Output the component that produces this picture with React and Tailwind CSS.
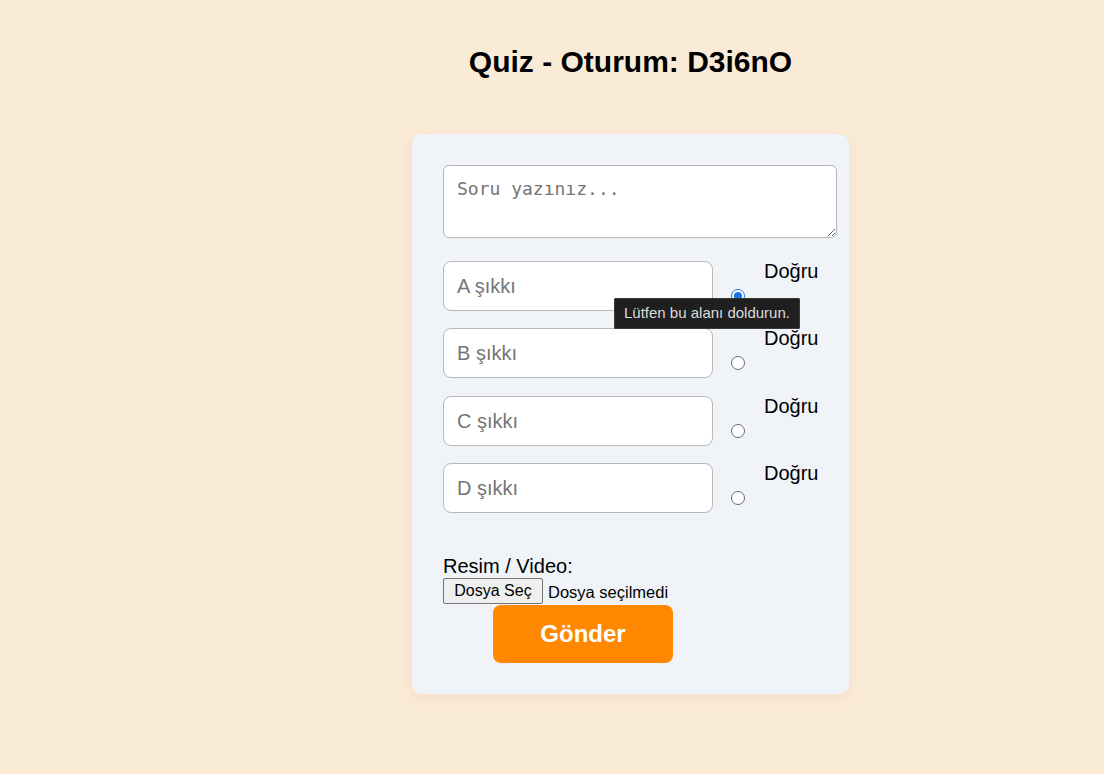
import React from "react";

const options = ["A", "B", "C", "D"];

function Radio({ checked }) {
  return checked ? (
    <span className="ml-[18px] mt-[28px] flex h-[14px] w-[14px] shrink-0 items-center justify-center rounded-full border-[1.5px] border-[#1a73e8] bg-white">
      <span className="h-[8px] w-[8px] rounded-full bg-[#1a73e8]" />
    </span>
  ) : (
    <span className="ml-[18px] mt-[28px] block h-[14px] w-[14px] shrink-0 rounded-full border border-[#6b6b6b] bg-white" />
  );
}

export default function App() {
  return (
    <div
      className="min-h-[774px] w-full bg-[#faebd7] flex flex-col items-center pl-[157px] pt-[44px] pb-[80px]"
      style={{ fontFamily: '"Liberation Sans", Arial, sans-serif' }}
    >
      <h1 className="text-[30px] leading-[36px] font-bold text-black">Quiz - Oturum: D3i6nO</h1>

      <div className="relative mt-[54px] w-[437px] rounded-[10px] bg-[#f0f4f9] pl-[31px] pt-[31px] pb-[31px] shadow-[0_4px_14px_rgba(180,140,90,0.12)]">
        <textarea
          placeholder="Soru yazınız..."
          className="block w-[394px] h-[73px] rounded-[6px] border border-[#b5b5b5] bg-white px-[13px] py-[12px] text-[18px] leading-[22px] text-black placeholder:text-[#757575] outline-none"
          style={{ fontFamily: '"DejaVu Sans Mono", "Liberation Mono", monospace' }}
        />

        <div className="mt-[23px] flex flex-col">
          {options.map((o, i) => (
            <div key={o} className={`flex items-start ${i === 1 ? "mb-[18px]" : "mb-[17px]"}`}>
              <input
                placeholder={`${o} şıkkı`}
                className="block w-[270px] h-[50px] rounded-[8px] border border-[#b8b8b8] bg-white px-[13px] text-[20px] text-black placeholder:text-[#757575] outline-none"
                style={{ fontFamily: '"Liberation Sans", Arial, sans-serif' }}
              />
              <Radio checked={i === 0} />
              <span className="ml-[19px] -mt-px text-[20px] leading-[23px] text-black">Doğru</span>
            </div>
          ))}
        </div>

        <div className="mt-[25px] text-[20px] leading-[23px] text-black">Resim / Video:</div>
        <div className="flex items-start h-[27px]">
          <div className="flex h-[26px] w-[100px] items-center justify-center rounded-[2px] border border-[#767676] bg-[#efefef] text-[16px] text-black">
            Dosya Seç
          </div>
          <span className="ml-[5px] mt-[2px] text-[16.5px] text-black">Dosya seçilmedi</span>
        </div>
        <button className="ml-[50px] block h-[58px] w-[180px] rounded-[8px] bg-[#ff8800] text-[24px] font-bold text-white">
          Gönder
        </button>

        <div className="absolute left-[202px] top-[164px] flex h-[31px] items-center rounded-[1px] border border-[#3a3a3a] bg-[#1f1f1f] px-[9px] text-[15px] text-[#dcdcdc] whitespace-nowrap">
          Lütfen bu alanı doldurun.
        </div>
      </div>
    </div>
  );
}
